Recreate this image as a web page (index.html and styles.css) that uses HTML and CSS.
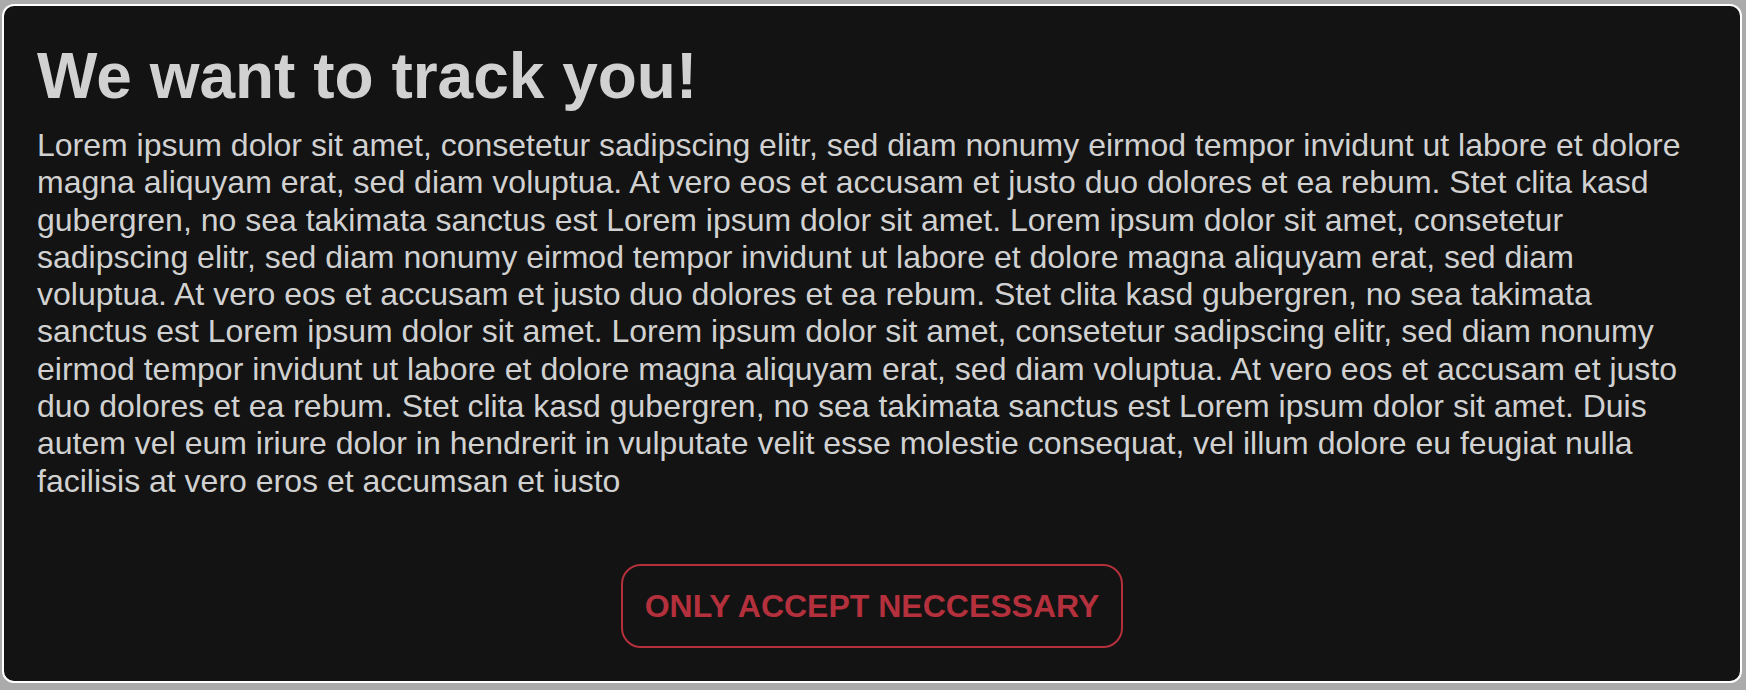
FILE: index.html
```html
<!DOCTYPE html>
<html lang="en">
<head>
<meta charset="utf-8">
<title>Cookie banner</title>
<link rel="stylesheet" href="styles.css">
</head>
<body>
<div class="card">
  <h1 class="title">We want to track you!</h1>
  <p class="text">Lorem ipsum dolor sit amet, consetetur sadipscing elitr, sed diam nonumy eirmod tempor invidunt ut labore et dolore magna aliquyam erat, sed diam voluptua. At vero eos et accusam et justo duo dolores et ea rebum. Stet clita kasd gubergren, no sea takimata sanctus est Lorem ipsum dolor sit amet. Lorem ipsum dolor sit amet, consetetur sadipscing elitr, sed diam nonumy eirmod tempor invidunt ut labore et dolore magna aliquyam erat, sed diam voluptua. At vero eos et accusam et justo duo dolores et ea rebum. Stet clita kasd gubergren, no sea takimata sanctus est Lorem ipsum dolor sit amet. Lorem ipsum dolor sit amet, consetetur sadipscing elitr, sed diam nonumy eirmod tempor invidunt ut labore et dolore magna aliquyam erat, sed diam voluptua. At vero eos et accusam et justo duo dolores et ea rebum. Stet clita kasd gubergren, no sea takimata sanctus est Lorem ipsum dolor sit amet. Duis autem vel eum iriure dolor in hendrerit in vulputate velit esse molestie consequat, vel illum dolore eu feugiat nulla facilisis at vero eros et accumsan et iusto</p>
  <div class="actions">
    <button class="btn" type="button">ONLY ACCEPT NECCESSARY</button>
  </div>
</div>
</body>
</html>
```

FILE: styles.css
```css
html, body {
  margin: 0;
  height: 100%;
}
body {
  background: #ababab;
  box-sizing: border-box;
  padding: 4px 4px 7px 2px;
  display: flex;
  font-family: "Liberation Sans", Arial, Helvetica, sans-serif;
}
.card {
  flex: 1;
  box-sizing: border-box;
  background: #131313;
  border: 2px solid #ffffff;
  border-radius: 12px;
  padding: 33px;
  display: flex;
  flex-direction: column;
  color: #d1d1d1;
}
.title {
  margin: 0;
  font-size: 64px;
  font-weight: bold;
  line-height: normal;
  color: #d1d1d1;
}
.text {
  margin: 14px 0 0 0;
  font-size: 32px;
  line-height: 37.3px;
}
.actions {
  margin-top: auto;
  display: flex;
  justify-content: center;
}
.btn {
  font-family: "Liberation Sans", Arial, Helvetica, sans-serif;
  font-size: 32px;
  font-weight: bold;
  line-height: normal;
  color: #b3303c;
  background: transparent;
  border: 2px solid #b3303c;
  border-radius: 20px;
  padding: 21.5px 22px;
  cursor: pointer;
}
```
